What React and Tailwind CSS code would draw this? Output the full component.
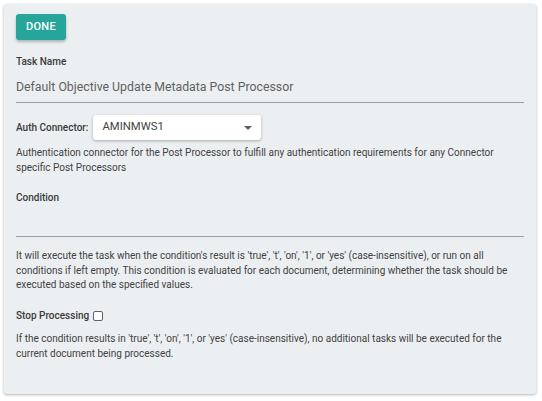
export default function App() {
  return (
    <div className="min-h-screen bg-white p-[4px] pr-[6px] font-['Roboto',sans-serif]">
      <div className="flex flex-col rounded-[3px] bg-[#eceff1] px-[12px] pb-[33px] pt-[9px] shadow-[0_1px_3px_rgba(0,0,0,0.3)] h-[390px]">
        {/* Done */}
        <div>
          <button className="h-[26px] w-[50px] rounded-[3px] bg-[#26a69a] text-[11px] font-medium tracking-[0.3px] text-white shadow-[0_2px_3px_rgba(0,0,0,0.25)]">
            DONE
          </button>
        </div>

        {/* Task Name */}
        <label className="mt-[15px] text-[10px] font-medium leading-[13px] text-[#3a3a3a]">Task Name</label>
        <div className="mt-[11px] border-b border-[#9e9e9e] pb-[7px] text-[12.3px] leading-[16px] text-[#616161]">
          Default Objective Update Metadata Post Processor
        </div>

        {/* Auth Connector */}
        <div className="mt-[12px] flex items-center gap-[5px]">
          <span className="text-[10px] font-medium text-[#3a3a3a]">Auth Connector:</span>
          <div className="flex h-[25px] w-[168px] items-center justify-between rounded-[3px] bg-white pl-[9px] pr-[9px] text-[11.3px] text-[#424242] shadow-[0_1px_3px_rgba(0,0,0,0.3)]">
            <span>AMINMWS1</span>
            <span className="h-0 w-0 border-x-[4px] border-t-[4px] border-x-transparent border-t-[#616161]" />
          </div>
        </div>
        <p className="mt-[6px] text-[10px] leading-[14.5px] text-[#424242]">
          Authentication connector for the Post Processor to fulfill any authentication requirements for any Connector specific Post Processors
        </p>

        {/* Condition */}
        <label className="mt-[16px] text-[10px] font-medium leading-[13px] text-[#3a3a3a]">Condition</label>
        <div className="mt-[6px] h-[37px] border-b border-[#9e9e9e]" />
        <p className="mt-[12px] text-[10px] leading-[14.7px] text-[#424242]">
          It will execute the task when the condition's result is 'true', 't', 'on', '1', or 'yes' (case-insensitive), or run on all conditions if left empty. This condition is evaluated for each document, determining whether the task should be executed based on the specified values.
        </p>

        {/* Stop Processing */}
        <div className="mt-[15px] flex items-center gap-[4px]">
          <span className="text-[10px] font-medium text-[#3a3a3a]">Stop Processing</span>
          <span className="h-[10px] w-[10px] rounded-[2px] border border-[#616161] bg-white" />
        </div>
        <p className="mt-[8px] text-[10px] leading-[15px] text-[#424242]">
          If the condition results in 'true', 't', 'on', '1', or 'yes' (case-insensitive), no additional tasks will be executed for the current document being processed.
        </p>
      </div>
    </div>
  )
}
